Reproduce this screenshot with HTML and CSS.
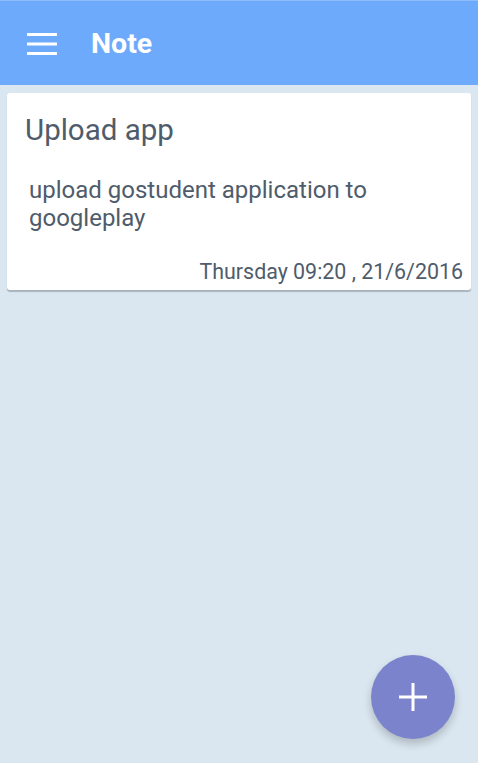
FILE: index.html
```html
<!DOCTYPE html>
<html lang="en">
  <head>
    <meta charset="UTF-8" />
    <meta name="viewport" content="width=device-width, initial-scale=1.0" />
    <title>Note</title>
    <link rel="stylesheet" href="styles.css">
  </head>
  <body>
    <header class="toolbar">
      <svg class="menu-icon" width="30" height="22" viewBox="0 0 30 22">
        <rect x="0" y="0" width="30" height="3" fill="#fff" />
        <rect x="0" y="9.5" width="30" height="3" fill="#fff" />
        <rect x="0" y="19" width="30" height="3" fill="#fff" />
      </svg>
      <h1>Note</h1>
    </header>

    <main class="notes">
      <div class="note-card">
        <h2>Upload app</h2>
        <p class="note-body">upload gostudent application to googleplay</p>
        <div class="note-date">Thursday 09:20 , 21/6/2016</div>
      </div>
    </main>

    <button class="fab" aria-label="Add note">
      <svg width="28" height="28" viewBox="0 0 28 28">
        <rect x="12.5" y="0" width="3" height="28" fill="#fff" />
        <rect x="0" y="12.5" width="28" height="3" fill="#fff" />
      </svg>
    </button>
  </body>
</html>
```

FILE: styles.css
```css
body {
  margin: 0;
  height: 763px;
  font-family: Roboto, "Noto Sans", sans-serif;
  background-color: #dae6f0;
  color: #4f5c6b;
  overflow: hidden;
}

.toolbar {
  height: 85px;
  background-color: #6eaafb;
  border-top: 1px solid #8fbdfb;
  box-sizing: border-box;
  display: flex;
  align-items: center;
  padding-left: 27px;
}

.menu-icon {
  margin-right: 34px;
  margin-top: 1px;
}

.toolbar h1 {
  margin: 0;
  color: white;
  font-size: 28.5px;
  font-weight: bold;
}

.notes {
  padding: 8px 7px;
}

.note-card {
  background-color: white;
  border-radius: 3px;
  box-shadow: 0px 2px 1px rgba(0, 0, 0, 0.22);
  padding: 20px 8px 6px 18px;
  height: 197px;
  box-sizing: border-box;
  display: flex;
  flex-direction: column;
}

.note-card h2 {
  margin: 0;
  font-size: 29.5px;
  font-weight: normal;
  line-height: 34px;
}

.note-body {
  margin: 29px 40px 0 4px;
  font-size: 24px;
  line-height: 28px;
  flex: 1;
}

.note-date {
  text-align: right;
  font-size: 21.4px;
  line-height: 24px;
}

.fab {
  position: absolute;
  left: 371px;
  top: 655px;
  width: 84px;
  height: 84px;
  border-radius: 50%;
  border: none;
  background-color: #7b83cc;
  box-shadow: 0px 5px 8px rgba(0, 0, 0, 0.2);
  display: flex;
  align-items: center;
  justify-content: center;
  padding: 0;
}
```
